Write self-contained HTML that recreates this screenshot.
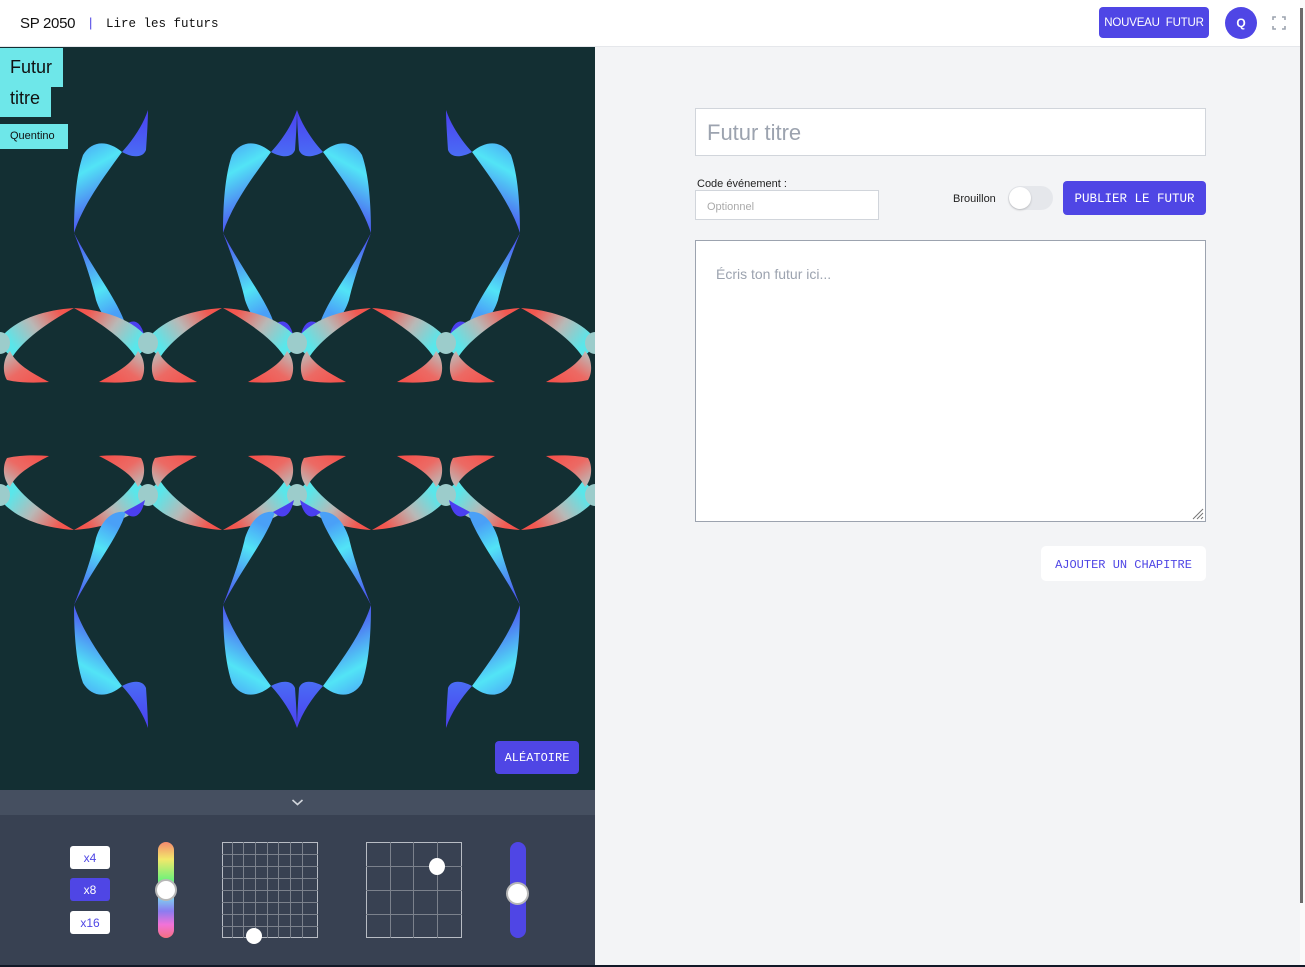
<!DOCTYPE html>
<html><head><meta charset="utf-8">
<style>
*{box-sizing:border-box;margin:0;padding:0}
body{width:1305px;height:967px;overflow:hidden;background:#f3f4f6;font-family:"Liberation Sans",sans-serif;position:relative}
.abs{position:absolute}
.mono{font-family:"Liberation Mono",monospace}
header{position:absolute;left:0;top:0;width:1300px;height:47px;background:#fff;border-bottom:1px solid #e5e7eb}
</style></head><body>
<header>
 <div class="abs" style="left:20px;top:15px;font-size:15px;color:#111;letter-spacing:-0.3px">SP 2050</div>
 <div class="abs" style="left:89px;top:15px;font-size:13px;color:#4f46e5">|</div>
 <div class="abs mono" style="left:106px;top:17px;font-size:12.5px;color:#111">Lire les futurs</div>
 <div class="abs" style="left:1099px;top:7px;width:110px;height:31px;background:#4f46e5;border-radius:4px;color:#fff;font-size:11.5px;line-height:32px;text-align:center;letter-spacing:-0.2px">NOUVEAU&nbsp;&nbsp;FUTUR</div>
 <div class="abs" style="left:1225px;top:7px;width:32px;height:32px;background:#4f46e5;border-radius:50%;color:#fff;font-size:12px;line-height:32px;text-align:center;font-weight:bold">Q</div>
 <svg class="abs" style="left:1272px;top:16px" width="14" height="14" viewBox="0 0 14 14" fill="none" stroke="#9ca3af" stroke-width="1.6"><path d="M1 4V1h3M10 1h3v3M13 10v3h-3M4 13H1v-3"/></svg>
</header>
<div class="abs" style="left:1300px;top:0;width:5px;height:967px;background:#fafafa"></div>
<div class="abs" style="left:1300px;top:8px;width:3px;height:895px;background:#6b6b6b"></div>

<div class="abs" style="left:0;top:47px;width:595px;height:743px;background:#132f33;overflow:hidden">
<svg width="595" height="743" viewBox="0 47 595 743" style="display:block">
<defs>
 <linearGradient id="gTip" x1="0" y1="0" x2="0" y2="1"><stop offset="0" stop-color="#4b3ff0"/><stop offset="1" stop-color="#4a6df5"/></linearGradient>
 <linearGradient id="gLobe" x1="0" y1="0" x2="0.3" y2="1"><stop offset="0" stop-color="#4aa0f7"/><stop offset="0.35" stop-color="#52e4f6"/><stop offset="1" stop-color="#4b3ff0"/></linearGradient>
 <linearGradient id="gLow" x1="0" y1="0" x2="0.3" y2="1"><stop offset="0" stop-color="#4b3ff0"/><stop offset="0.7" stop-color="#52e4f6"/><stop offset="1" stop-color="#4aa0f7"/></linearGradient>
 <linearGradient id="gWing" x1="0" y1="0" x2="1" y2="0.5"><stop offset="0" stop-color="#f54e48"/><stop offset="0.2" stop-color="#f25a52"/><stop offset="0.6" stop-color="#b9b8b6"/><stop offset="1" stop-color="#5ae6ea"/></linearGradient>
 <linearGradient id="gLw" x1="0" y1="1" x2="1" y2="0"><stop offset="0" stop-color="#f54e48"/><stop offset="0.5" stop-color="#ec6a64"/><stop offset="1" stop-color="#b6c6c4"/></linearGradient>
 <g id="bh">
  <path d="M0,110 C-5,125 -15,140 -26,152 C-15,158 -5,158 -2,150 C-1,135 0,120 0,110Z" fill="url(#gTip)"/>
  <path d="M-26,152 C-40,140 -56,140 -65,155 C-72,175 -74,205 -74,233 C-65,205 -45,178 -26,152Z" fill="url(#gLobe)"/>
  <path d="M-74,233 C-64,258 -56,282 -52,300 C-46,318 -36,328 -22,326 C-30,300 -55,270 -74,233Z" fill="url(#gLow)"/>
  <path d="M-24,326 C-15,318 -7,320 -3,338 C-10,333 -17,330 -24,326Z" fill="#4b3ff0"/>
 </g>
 <g id="rh">
  <path d="M-74,308 C-45,310 -20,318 -4,334 C0,343 -4,354 -13,356 C-24,340 -45,324 -74,308Z" fill="url(#gWing)"/>
  <path d="M-49,382 C-30,372 -16,364 -10,351 C-3,358 -2,372 -7,380 C-20,383 -35,383 -49,382Z" fill="url(#gLw)"/>
 </g>
 <g id="X">
  <use href="#rh"/><use href="#rh" transform="scale(-1,1)"/>
  <ellipse cx="0" cy="343" rx="10" ry="11" fill="#9ccccb"/>
 </g>
 <g id="B">
  <use href="#bh" x="148"/>
  <use href="#bh" x="297"/><use href="#bh" transform="translate(297,0) scale(-1,1)"/>
  <use href="#bh" transform="translate(446,0) scale(-1,1)"/>
 </g>
 <g id="R">
  <use href="#X" x="0"/><use href="#X" x="148"/><use href="#X" x="297"/><use href="#X" x="446"/><use href="#X" x="595"/>
 </g>
</defs>
<use href="#B"/><use href="#R"/>
<g transform="translate(0,838) scale(1,-1)"><use href="#R"/><use href="#B"/></g>
</svg>
</div>
<div class="abs" style="left:0;top:48px;width:63px;height:39px;background:#6ee7e9;font-size:18px;color:#111;padding:9px 0 0 10px">Futur</div>
<div class="abs" style="left:0;top:86px;width:51px;height:31px;background:#6ee7e9;font-size:18px;color:#111;padding:2px 0 0 10px">titre</div>
<div class="abs" style="left:0;top:124px;width:68px;height:25px;background:#6ee7e9;font-size:11px;color:#111;padding:6px 0 0 10px">Quentino</div>
<div class="abs mono" style="left:495px;top:741px;width:84px;height:33px;background:#4f46e5;border-radius:4px;color:#fff;font-size:12px;line-height:35px;text-align:center">ALÉATOIRE</div>

<div class="abs" style="left:0;top:790px;width:595px;height:25px;background:#454f60"></div>
<svg class="abs" style="left:291px;top:798px" width="13" height="9" viewBox="0 0 13 9"><path d="M1.5 2l5 4.5 5-4.5" fill="none" stroke="#d1d5db" stroke-width="1.6"/></svg>
<div class="abs" style="left:0;top:815px;width:595px;height:150px;background:#384152"></div>
<div class="abs" style="left:0;top:965px;width:1305px;height:2px;background:#111827"></div>
<div class="abs" style="left:70px;top:846px;width:40px;height:23px;background:#fff;border-radius:3px;color:#4f46e5;font-size:12px;line-height:25px;text-align:center">x4</div>
<div class="abs" style="left:70px;top:878px;width:40px;height:23px;background:#4f46e5;border-radius:3px;color:#fff;font-size:12px;line-height:25px;text-align:center">x8</div>
<div class="abs" style="left:70px;top:911px;width:40px;height:23px;background:#fff;border-radius:3px;color:#4f46e5;font-size:12px;line-height:25px;text-align:center">x16</div>
<div class="abs" style="left:158px;top:842px;width:16px;height:96px;border-radius:8px;background:linear-gradient(#f58a6e,#f2e86b 18%,#6cf27a 40%,#7fd0f0 58%,#8b7cf0 72%,#f272d8 86%,#f57080)"></div>
<div class="abs" style="left:155px;top:879px;width:22px;height:22px;border-radius:50%;background:#fff;border:2px solid #b7b7b7"></div>
<svg class="abs" style="left:221px;top:842px" width="98" height="98" viewBox="0 0 98 98">
 <g fill="none">
 <rect x="1.5" y="0.5" width="95" height="95" stroke="#b8bcc4"/>
 <path d="M11.5 0v96M22.5 0v96M34.5 0v96M46.5 0v96M57.5 0v96M69.5 0v96M81.5 0v96M1 12.5h96M1 24.5h96M1 36.5h96M1 48.5h96M1 60.5h96M1 72.5h96M1 84.5h96" stroke="#7b818c"/>
 </g></svg>
<div class="abs" style="left:246px;top:928px;width:16px;height:16px;border-radius:50%;background:#fff"></div>
<svg class="abs" style="left:365px;top:842px" width="98" height="98" viewBox="0 0 98 98">
 <g fill="none"><rect x="1.5" y="0.5" width="95" height="95" stroke="#b8bcc4"/>
 <path d="M25.5 0v96M48.5 0v96M72.5 0v96M1 24.5h96M1 48.5h96M1 72.5h96" stroke="#7b818c"/></g></svg>
<div class="abs" style="left:429px;top:858px;width:16px;height:17px;border-radius:50%;background:#fff"></div>
<div class="abs" style="left:510px;top:842px;width:16px;height:96px;border-radius:8px;background:#4f46e5"></div>
<div class="abs" style="left:506px;top:882px;width:23px;height:23px;border-radius:50%;background:#fff;border:2px solid #b7b7b7"></div>

<div class="abs" style="left:695px;top:108px;width:511px;height:48px;background:#fff;border:1px solid #d1d5db;font-size:22px;color:#9ca3af;padding:11px 0 0 11px">Futur titre</div>
<div class="abs" style="left:697px;top:178px;font-size:11px;color:#222">Code événement :</div>
<div class="abs" style="left:695px;top:190px;width:184px;height:30px;background:#fff;border:1px solid #d1d5db;font-size:11px;color:#aaa;padding:10px 0 0 11px">Optionnel</div>
<div class="abs" style="left:953px;top:193px;font-size:11px;color:#222">Brouillon</div>
<div class="abs" style="left:1008px;top:186px;width:45px;height:24px;border-radius:12px;background:#e5e7eb"></div>
<div class="abs" style="left:1009px;top:187px;width:22px;height:22px;border-radius:50%;background:#fff;box-shadow:0 1px 2px rgba(0,0,0,.2)"></div>
<div class="abs mono" style="left:1063px;top:181px;width:143px;height:34px;background:#4f46e5;border-radius:4px;color:#fff;font-size:12.5px;line-height:36px;text-align:center">PUBLIER LE FUTUR</div>
<div class="abs" style="left:695px;top:240px;width:511px;height:282px;background:#fff;border:1px solid #9ca3af;font-size:14px;color:#9ca3af;padding:25px 0 0 20px">Écris ton futur ici...</div>
<svg class="abs" style="left:1190px;top:506px" width="14" height="14"><path d="M13 3L3 13M13 7L7 13M13 11L11 13" stroke="#777" stroke-width="1"/></svg>
<div class="abs mono" style="left:1041px;top:546px;width:165px;height:35px;background:#fff;border-radius:5px;color:#4f46e5;font-size:12px;line-height:38px;text-align:center">AJOUTER UN CHAPITRE</div>
</body></html>
